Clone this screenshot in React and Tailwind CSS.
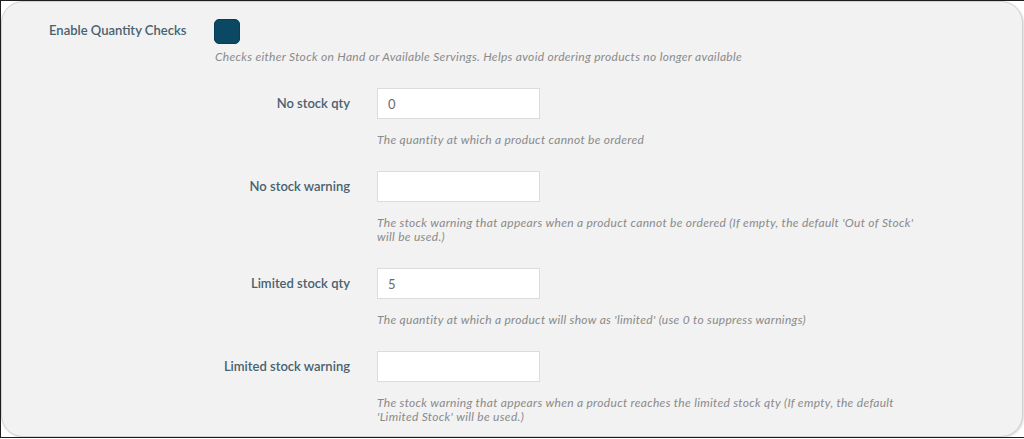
import { useState } from 'react';

const rows = [
  {
    label: 'No stock qty',
    value: '0',
    help: ['The quantity at which a product cannot be ordered'],
  },
  {
    label: 'No stock warning',
    value: '',
    help: [
      "The stock warning that appears when a product cannot be ordered (If empty, the default 'Out of Stock'",
      'will be used.)',
    ],
  },
  {
    label: 'Limited stock qty',
    value: '5',
    help: ["The quantity at which a product will show as 'limited' (use 0 to suppress warnings)"],
  },
  {
    label: 'Limited stock warning',
    value: '',
    help: [
      'The stock warning that appears when a product reaches the limited stock qty (If empty, the default',
      "'Limited Stock' will be used.)",
    ],
  },
];

const SettingRow = ({ label, value, help }) => {
  const [val, setVal] = useState(value);
  return (
    <div className="flex pb-[24px]">
      <div className="w-[348px] h-[31px] flex items-center justify-end text-[13px] font-semibold text-[#48616f]">
        {label}
      </div>
      <div className="ml-[27px] flex flex-col">
        <input
          type="text"
          value={val}
          onChange={(e) => setVal(e.target.value)}
          className="w-[163px] h-[31px] bg-white border border-[#dcdcdc] px-[10px] text-[13px] text-[#6a6a6a] outline-none"
        />
        <p className="mt-[14px] text-[12px] leading-[14px] italic tracking-[0.3px] text-[#8a8a8a] whitespace-nowrap">
          {help.map((line, i) => (
            <span key={i} className="block">{line}</span>
          ))}
        </p>
      </div>
    </div>
  );
};

const App = () => {
  const [enabled, setEnabled] = useState(true);

  return (
    <div
      className="w-[1024px] h-[438px] bg-white border-l border-t border-b border-[#1e1e1e] flex pr-[1px]"
      style={{ fontFamily: 'Lato, "Open Sans", sans-serif' }}
    >
      <div className="flex-1 rounded-[22px] bg-[#f2f2f2] border border-[#d2d2d2] shadow-[1px_1px_2px_rgba(0,0,0,0.15)]">
        {/* Enable toggle */}
        <div className="pt-[16px]">
          <div className="flex items-center h-[26px]">
            <span className="w-[212px] pl-[47px] text-[13px] font-semibold text-[#48616f]">
              Enable Quantity Checks
            </span>
            <button
              type="button"
              onClick={() => setEnabled(!enabled)}
              className={`w-[26px] h-[25px] rounded-[5px] border ${
                enabled ? 'bg-[#0b4863] border-[#093d55]' : 'bg-white border-[#bbb]'
              }`}
            />
          </div>
          <p className="ml-[213px] mt-[6px] text-[12px] leading-[14px] italic tracking-[0.3px] text-[#8a8a8a]">
            Checks either Stock on Hand or Available Servings. Helps avoid ordering products no longer available
          </p>
        </div>

        <div className="mt-[24px]">
          {rows.map((row) => (
            <SettingRow key={row.label} {...row} />
          ))}
        </div>
      </div>
    </div>
  );
};

export default App;
